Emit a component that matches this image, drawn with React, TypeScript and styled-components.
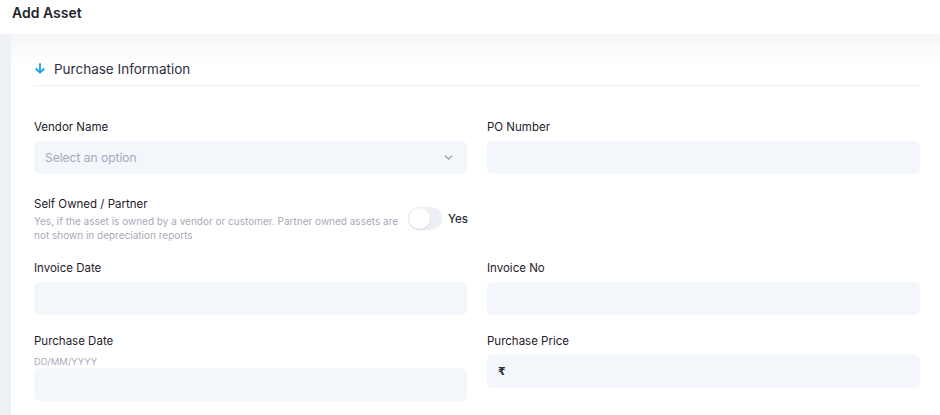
import * as React from 'react'
import styled, { createGlobalStyle } from 'styled-components'
import { ChevronDown } from 'lucide-react'

const GlobalStyle = createGlobalStyle`
  * {
    box-sizing: border-box;
  }
  body {
    margin: 0;
    background: #fff;
    font-family: Inter, "Noto Sans", "DejaVu Sans", sans-serif;
    color: #2b2c3a;
  }
`

const ArrowDown = () => (
  <svg width="10" height="11" viewBox="0 0 10 11" fill="none">
    <path
      d="M5 1v8.5M1.3 6 5 9.6 8.7 6"
      stroke="#1d9ee9"
      strokeWidth="1.8"
      strokeLinecap="round"
      strokeLinejoin="round"
    />
  </svg>
)

const App = () => {
  return (
    <Page>
      <GlobalStyle />
      <Header>Add Asset</Header>
      <Body>
        <Strip />
        <Panel>
          <SectionHead>
            <ArrowDown />
            <SectionTitle>Purchase Information</SectionTitle>
          </SectionHead>

          <Form>
            <Field>
              <Label>Vendor Name</Label>
              <Input>
                <Placeholder>Select an option</Placeholder>
                <ChevronDown size={13} color="#8b8fa3" strokeWidth={2} />
              </Input>
            </Field>
            <Field>
              <Label>PO Number</Label>
              <Input />
            </Field>

            <SelfRow>
              <SelfText>
                <Label>Self Owned / Partner</Label>
                <Help>
                  Yes, if the asset is owned by a vendor or customer. Partner owned assets are
                  <br />
                  not shown in depreciation reports
                </Help>
              </SelfText>
              <Toggle>
                <Knob />
              </Toggle>
              <ToggleText>Yes</ToggleText>
            </SelfRow>
            <div />

            <Field>
              <Label>Invoice Date</Label>
              <Input />
            </Field>
            <Field>
              <Label>Invoice No</Label>
              <Input />
            </Field>

            <Field>
              <Label>Purchase Date</Label>
              <Hint>DD/MM/YYYY</Hint>
              <Input />
            </Field>
            <Field>
              <Label>Purchase Price</Label>
              <Input>
                <Currency>₹</Currency>
              </Input>
            </Field>
          </Form>
        </Panel>
      </Body>
    </Page>
  )
}

export default App

// Styles

const Page = styled.div`
  width: 940px;
  height: 415px;
  overflow: hidden;
  display: flex;
  flex-direction: column;
`

const Header = styled.div`
  height: 34px;
  padding: 3px 12px 0;
  font-size: 14px;
  line-height: 20px;
  font-weight: 600;
  color: #23242f;
  background: #fff;
`

const Body = styled.div`
  flex: 1;
  display: flex;
`

const Strip = styled.div`
  width: 11px;
  background: #eef2f7;
`

const Panel = styled.div`
  flex: 1;
  padding: 25px 20px 0 23px;
  background: linear-gradient(#f5f5f6 0px, #fbfbfc 18px, #ffffff 30px);
`

const SectionHead = styled.div`
  display: flex;
  align-items: center;
  gap: 9px;
  height: 27px;
  padding: 0 0 7px 1px;
  border-bottom: 1px solid #ecedf3;
`

const SectionTitle = styled.span`
  font-size: 13.5px;
  line-height: 20px;
  font-weight: 400;
  color: #2e2f3d;
`

const Form = styled.div`
  display: grid;
  grid-template-columns: 1fr 1fr;
  column-gap: 20px;
  row-gap: 17px;
  margin-top: 32px;
`

const Field = styled.div`
  display: flex;
  flex-direction: column;
`

const Label = styled.div`
  font-size: 11.5px;
  line-height: 18px;
  font-weight: 400;
  color: #1f202b;
  margin-bottom: 5px;
`

const Hint = styled.div`
  font-size: 9.5px;
  line-height: 13px;
  color: #a9acbb;
`

const Input = styled.div`
  height: 33px;
  border-radius: 5px;
  background: #f3f6fa;
  display: flex;
  align-items: center;
  justify-content: space-between;
  padding: 0 12px 0 11px;
`

const Placeholder = styled.span`
  font-size: 12px;
  font-weight: 400;
  color: #a4a8ba;
`

const Currency = styled.span`
  font-family: "DejaVu Sans", sans-serif;
  font-size: 11px;
  font-weight: 700;
  color: #2b2c3a;
`

const SelfRow = styled.div`
  display: flex;
  align-items: center;
  padding-top: 4px;
`

const SelfText = styled.div`
  flex: 1;
  min-width: 0;
  display: flex;
  flex-direction: column;

  ${Label} {
    margin-bottom: 1px;
  }
`

const Help = styled.div`
  font-size: 10px;
  line-height: 14px;
  color: #a7aab8;
  white-space: nowrap;
`

const Toggle = styled.div`
  flex-shrink: 0;
  width: 34px;
  height: 23px;
  border-radius: 12px;
  background: #eceff4;
  padding: 1px;
  margin-right: 6px;
  display: flex;
  align-items: center;
`

const Knob = styled.div`
  width: 21px;
  height: 21px;
  border-radius: 50%;
  background: #fff;
  box-shadow: 0 1px 2px rgba(0, 0, 0, 0.12);
`

const ToggleText = styled.span`
  flex-shrink: 0;
  width: 19px;
  font-size: 11.5px;
  font-weight: 500;
  color: #2b2c3a;
`
